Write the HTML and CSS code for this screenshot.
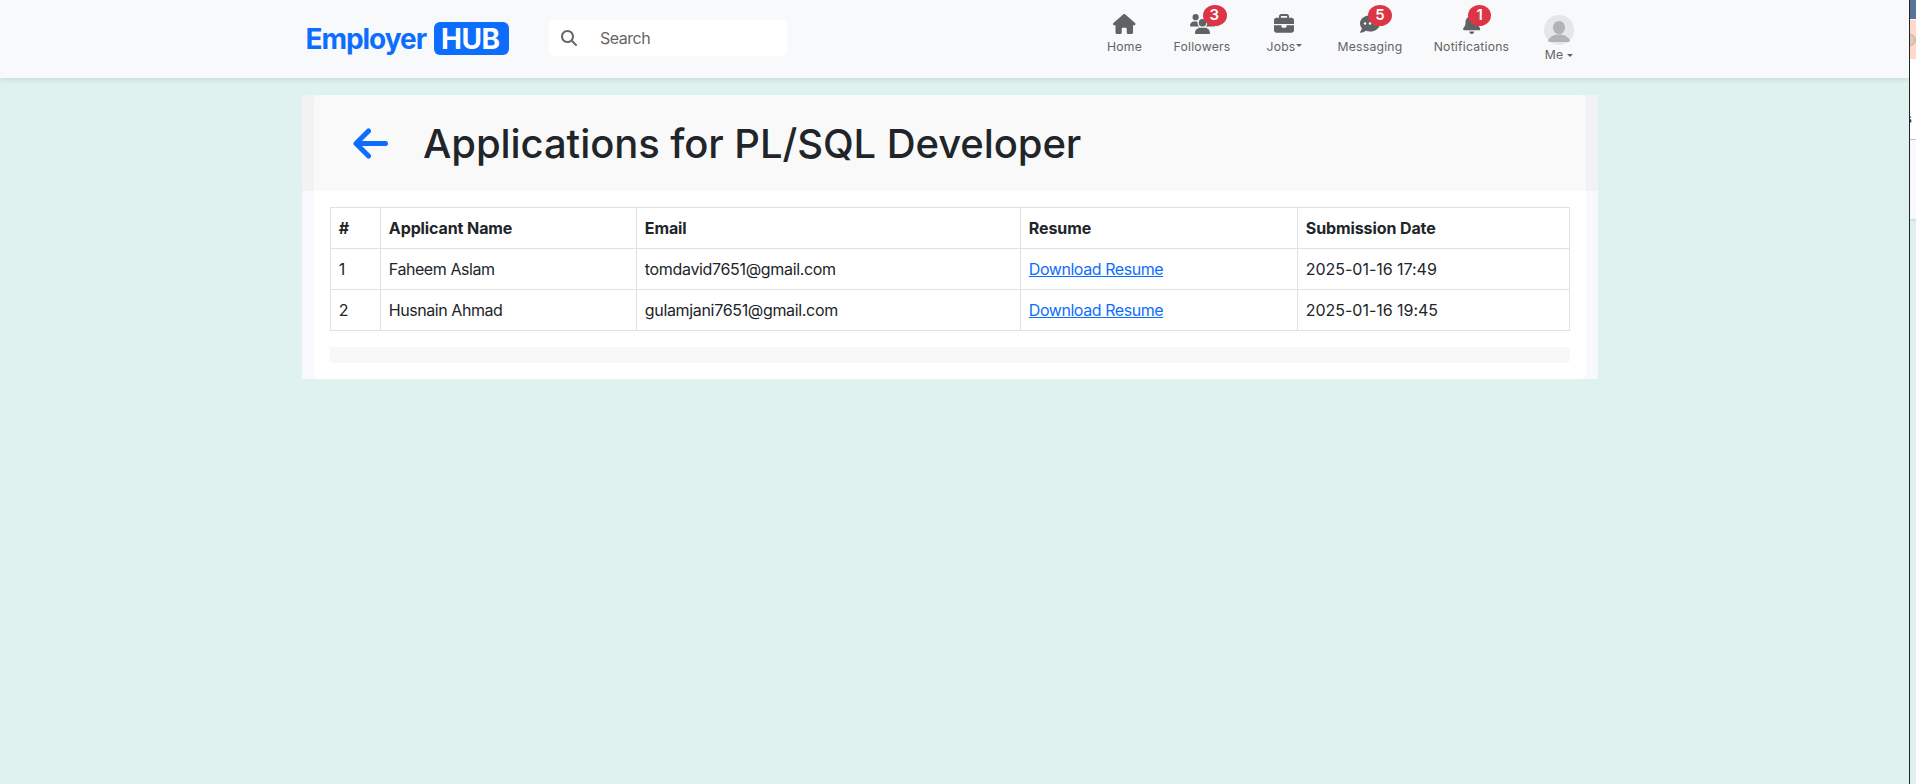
FILE: index.html
```html
<!DOCTYPE html>
<html lang="en">
<head>
<meta charset="utf-8">
<title>Employer HUB</title>
<link rel="stylesheet" href="styles.css">
</head>
<body>
<div class="screen">
<div class="page">
<header class="topbar">
  <a class="brand"><span class="brand-name">Employer</span><span class="brand-hub"><span>HUB</span></span></a>
  <div class="search">
    <svg width="16" height="16" viewBox="0 0 512 512"><path d="M416 208c0 45.9-14.9 88.3-40 122.7L502.6 457.4c12.5 12.5 12.5 32.8 0 45.3s-32.8 12.5-45.3 0L330.7 376c-34.4 25.2-76.8 40-122.7 40C93.1 416 0 322.9 0 208S93.1 0 208 0S416 93.1 416 208zM208 352a144 144 0 1 0 0-288 144 144 0 1 0 0 288z"/></svg>
    <span>Search</span>
  </div>
  <nav class="nav">
    <a class="item"><span class="icon"><svg width="22.5" height="20" viewBox="0 0 576 512"><path d="M575.8 255.5c0 18-15 32.1-32 32.1h-32l.7 160.2c0 2.7-.2 5.4-.5 8.1V472c0 22.1-17.9 40-40 40H392c-22.1 0-40-17.9-40-40V384c0-17.7-14.3-32-32-32H256c-17.7 0-32 14.3-32 32v88c0 22.1-17.9 40-40 40H104c-22.1 0-40-17.9-40-40V287.6H32c-18 0-32-14-32-32.1c0-9 3-17 10-24L266.4 8c7-7 15-8 22-8s15 2 21 7L564.8 231.5c8 7 12 15 11 24z"/></svg></span><span>Home</span></a>
    <a class="item"><span class="icon"><svg width="25" height="20" viewBox="0 0 640 512"><path d="M144 0a80 80 0 1 1 0 160A80 80 0 1 1 144 0zM512 0a80 80 0 1 1 0 160A80 80 0 1 1 512 0zM0 298.7C0 239.8 47.8 192 106.7 192h42.7c15.9 0 31 3.5 44.6 9.7c-1.3 7.2-1.9 14.7-1.9 22.3c0 38.2 16.8 72.5 43.3 96H21.3C9.6 320 0 310.4 0 298.7zM405.3 320h-.7c26.6-23.5 43.3-57.8 43.3-96c0-7.6-.7-15-1.9-22.3c13.6-6.3 28.7-9.7 44.6-9.7h42.7C592.2 192 640 239.8 640 298.7c0 11.8-9.6 21.3-21.3 21.3H405.3zM224 224a96 96 0 1 1 192 0 96 96 0 1 1 -192 0zM128 485.3C128 411.7 187.7 352 261.3 352H378.7C452.3 352 512 411.7 512 485.3c0 14.7-11.9 26.7-26.7 26.7H154.7c-14.7 0-26.7-11.9-26.7-26.7z"/></svg><b class="badge">3</b></span><span>Followers</span></a>
    <a class="item"><span class="icon"><svg width="20" height="20" viewBox="0 0 512 512"><path d="M184 48H328c4.4 0 8 3.6 8 8V96H176V56c0-4.4 3.6-8 8-8zm-56 8V96H64C28.7 96 0 124.7 0 160v96H512V160c0-35.3-28.7-64-64-64H384V56c0-30.9-25.1-56-56-56H184c-30.9 0-56 25.1-56 56zM512 288H320v32c0 17.7-14.3 32-32 32H224c-17.7 0-32-14.3-32-32V288H0V416c0 35.3 28.7 64 64 64H448c35.3 0 64-28.7 64-64V288z"/></svg></span><span class="label">Jobs<i class="caret caret-jobs"></i></span></a>
    <a class="item"><span class="icon"><svg width="20" height="20" viewBox="0 0 512 512"><path d="M256 448c141.400 0 256-93.100 256-208S397.400 32 256 32S0 125.100 0 240c0 45.100 17.700 86.800 47.700 120.900c-1.900 24.500-11.400 46.300-21.400 62.900c-5.500 9.200-11.100 16.600-15.200 21.600c-2.100 2.500-3.700 4.400-6.500 7.400c-4.600 4.600-5.900 11.400-3.400 17.400c2.500 6 8.300 9.900 14.800 9.900c28.700 0 57.600-8.900 81.600-19.300c22.900-10 42.400-21.900 54.300-30.600c31.800 11.500 67 17.900 104.100 17.900z"/><g fill="#f8f9fb"><circle cx="128" cy="240" r="32"/><circle cx="256" cy="240" r="32"/><circle cx="384" cy="240" r="32"/></g></svg><b class="badge">5</b></span><span>Messaging</span></a>
    <a class="item"><span class="icon"><svg width="17.5" height="20" viewBox="0 0 448 512"><path d="M224 0c-17.700 0-32 14.300-32 32V51.200C119 66 64 130.600 64 208v18.800c0 47-17.300 92.400-48.500 127.600l-7.400 8.300c-8.400 9.400-10.400 22.900-5.300 34.400S19.400 416 32 416H416c12.600 0 24-7.400 29.200-18.900s3.100-25-5.300-34.400l-7.400-8.300C401.300 319.200 384 273.900 384 226.800V208c0-77.400-55-142-128-156.800V32c0-17.700-14.300-32-32-32zm45.300 493.300c12-12 18.700-28.300 18.700-45.300H160c0 17 6.700 33.300 18.700 45.300s28.300 18.700 45.300 18.700s33.300-6.700 45.300-18.700z"/></svg><b class="badge badge-narrow">1</b></span><span>Notifications</span></a>
    <a class="item me"><svg class="avatar" width="30" height="30" viewBox="0 0 30 30"><circle cx="15" cy="15" r="15" fill="#e4e6e7"/><ellipse cx="15" cy="12.500" rx="6" ry="6.600" fill="#aeb4b7"/><path d="M4 25.500C6 21.500 10 19.500 15 19.500S24 21.500 26 25.500Q25.500 27 24 27H6Q4.500 27 4 25.500z" fill="#aeb4b7"/></svg><span class="label">Me<i class="caret caret-me"></i></span></a>
  </nav>
</header>
<main class="container">
  <div class="heading">
    <svg width="35" height="31" viewBox="0 0 35 31"><path d="M15.500 3L3 15.500L15.500 28M3 15.500H32.500" fill="none" stroke="#0d6efd" stroke-width="5" stroke-linecap="round" stroke-linejoin="round"/></svg>
    <h1>Applications for PL/SQL Developer</h1>
  </div>
  <div class="body">
    <table>
      <colgroup><col class="c1"><col class="c2"><col class="c3"><col class="c4"><col class="c5"></colgroup>
      <thead><tr><th>#</th><th>Applicant Name</th><th>Email</th><th>Resume</th><th>Submission Date</th></tr></thead>
      <tbody>
        <tr><td>1</td><td>Faheem Aslam</td><td class="mail">tomdavid7651@gmail.com</td><td><a class="link">Download Resume</a></td><td class="date">2025-01-16 17:49</td></tr>
        <tr><td>2</td><td>Husnain Ahmad</td><td class="mail">gulamjani7651@gmail.com</td><td><a class="link">Download Resume</a></td><td class="date">2025-01-16 19:45</td></tr>
      </tbody>
    </table>
    <div class="foot"></div>
  </div>
</main>
</div>
<aside class="edge">
  <div class="edge-blue"></div>
  <div class="edge-peach"><i></i></div>
  <div class="edge-white"><span>s</span></div>
  <div class="edge-light"></div>
</aside>
</div>
</body>
</html>
```
FILE: styles.css
```css
* { box-sizing: border-box; }
body { margin: 0; font-family: Inter, "Liberation Sans", sans-serif; font-size: 16px; line-height: 24px; color: #212529; background: #dff2ef; }
svg { display: block; flex: none; }
.screen { display: flex; height: 784px; overflow: hidden; }
.page { width: 1909px; flex: none; }
.topbar { display: flex; align-items: flex-start; height: 78px; padding-left: 305px; background: #f8f9fb; box-shadow: 0 2px 5px rgba(0,0,0,.09); color: #666; }
.brand { display: flex; align-items: flex-start; width: 244px; padding-top: 22px; color: #0d6efd; font-size: 28px; font-weight: 700; line-height: 35px; white-space: nowrap; }
.brand-name { width: 129px; padding-left: .5px; letter-spacing: -1.05px; }
.brand-hub { width: 75px; height: 33px; border-radius: 6px; padding-left: 7px; background: #0d6efd; color: #fff; letter-spacing: -.4px; }
.search { display: flex; align-items: center; width: 238px; height: 36px; margin-top: 20px; padding-left: 12px; border-radius: 5px; background: #fff; color: #666; }
.search svg { fill: #666; }
.search span { margin-left: 23px; letter-spacing: -.5px; }
.nav { display: grid; grid-template-columns: 79px 76px 88px 84px 119px 56px; margin-left: 298px; fill: #606363; }
.item { display: flex; flex-direction: column; align-items: center; padding-top: 14px; font-size: 12.2px; line-height: 18px; letter-spacing: .22px; color: #626464; white-space: nowrap; }
.icon { position: relative; height: 24px; }
.badge { position: absolute; left: calc(100% - 12px); top: -9px; min-width: 24px; height: 21px; border-radius: 50%; background: #dc3545; color: #fff; font-size: 15px; line-height: 19px; font-weight: 600; text-align: center; }
.badge-narrow { min-width: 23px; }
.label { display: flex; align-items: center; }
.caret { border-top: 3.5px solid #626464; border-left: 3px solid transparent; border-right: 3px solid transparent; }
.caret-jobs { margin-top: -3px; }
.caret-me { margin-left: 4px; }
.me { padding-top: 15px; }
.avatar { margin-bottom: 1px; }
.container { width: 1296px; margin: 17px 0 0 302px; padding: 0 12px; background: linear-gradient(#f1f2f4 96px, #f8f9fc 96px); }
.heading { display: flex; align-items: center; height: 96px; padding-left: 39px; border-radius: 5px 5px 0 0; background: #f9f9f9; }
h1 { margin: 2px 0 0 35px; font-size: 40px; font-weight: 500; line-height: 48px; letter-spacing: -.08px; white-space: nowrap; }
.body { height: 188px; padding: 16px; border-radius: 0 0 5px 5px; background: #fff; }
table { width: 1240px; table-layout: fixed; border-collapse: collapse; }
.c1 { width: 50px; } .c2 { width: 256px; } .c3 { width: 384px; } .c4 { width: 277px; } .c5 { width: 272px; }
th, td { height: 41px; padding: 8px 7.8px; border: 1px solid #dee2e6; text-align: left; letter-spacing: -.44px; white-space: nowrap; }
th { font-weight: 700; letter-spacing: -.1px; }
.mail { letter-spacing: -.33px; }
.date { letter-spacing: -.03px; }
.link { color: #0d6efd; text-decoration: underline; }
.foot { height: 16px; margin-top: 16px; border-radius: 0 0 4px 4px; background: #f8f8f8; }
.edge { width: 7px; border-left: 1px solid #202526; overflow: hidden; flex: none; }
.edge-blue { height: 19px; background: #5a7299; }
.edge-peach { height: 40px; padding-top: 14px; background: #ffd8c8; border-top: 1px solid #fff; }
.edge-peach i { display: block; width: 12px; height: 12px; margin-left: -6px; border: 1px solid #c8aba2; border-radius: 50%; background: #dfc8bf; }
.edge-white { height: 81px; padding-top: 48px; background: #fff; border-bottom: 1px solid #c5c7c9; }
.edge-white span { display: block; margin-left: -4px; font-size: 11px; }
.edge-light { height: 79px; background: #f8f9fb; box-shadow: 0 1px 3px rgba(0,0,0,.15); }
```
